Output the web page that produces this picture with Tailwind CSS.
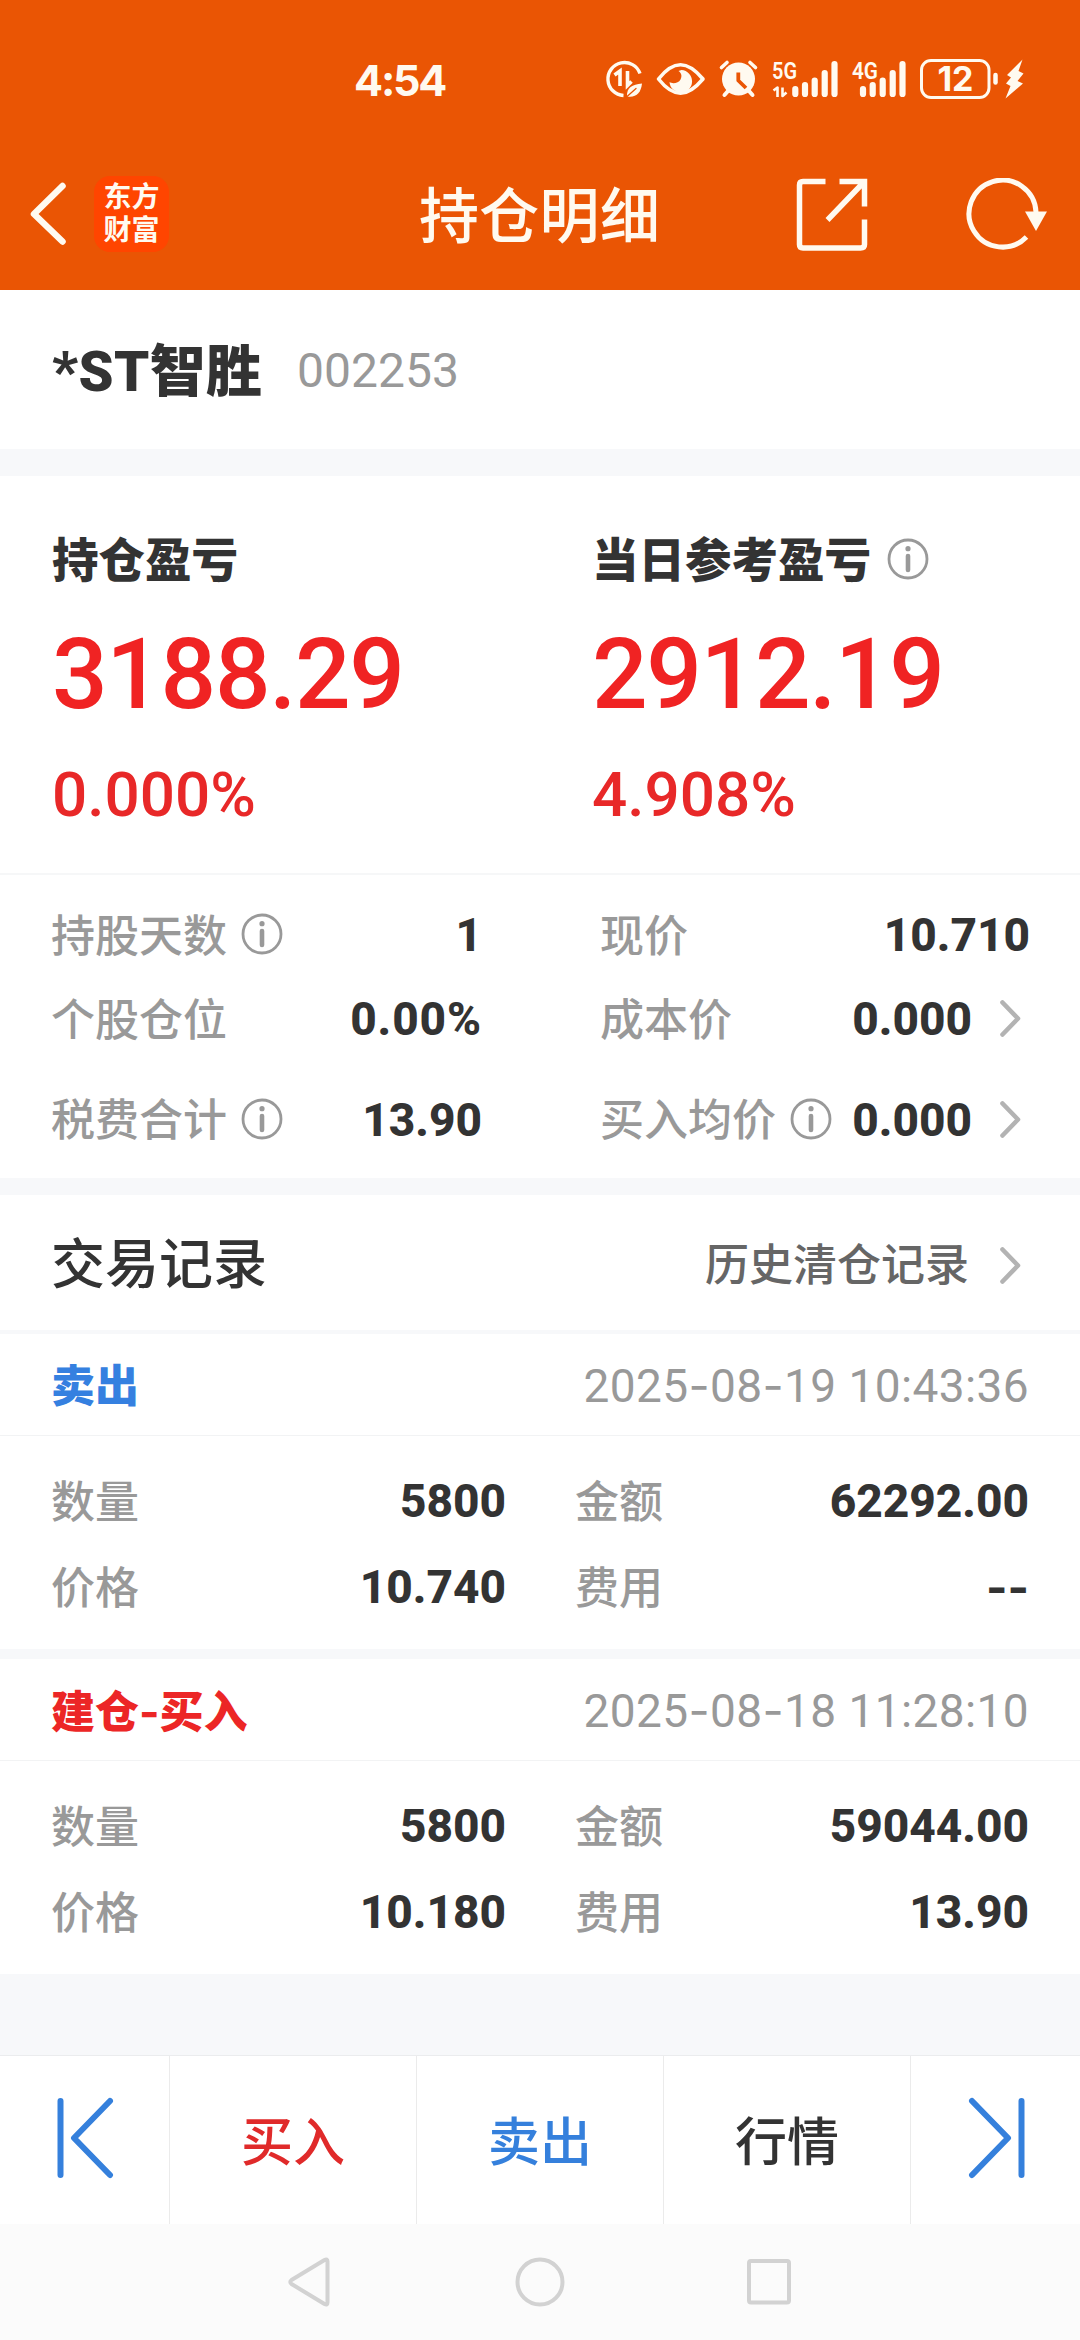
<!DOCTYPE html>
<html lang="zh-CN">
<head>
<meta charset="utf-8">
<title>持仓明细</title>
<script src="https://cdn.jsdelivr.net/npm/@tailwindcss/browser@4"></script>
</head>
<body class="w-[1080px] h-[2340px] overflow-hidden bg-[#f7f8fa] text-[#333333] leading-none whitespace-nowrap font-[Roboto,'Noto_Sans_CJK_SC',sans-serif]">
<svg class="hidden">
  <symbol id="info" viewBox="0 0 42 42"><circle cx="21" cy="21" r="19" fill="none" stroke="#999" stroke-width="2.8"/><circle cx="21" cy="10.7" r="2.6" fill="#999"/><path d="M21 18v14" stroke="#999" stroke-width="4.6" stroke-linecap="round"/></symbol>
  <symbol id="next" viewBox="0 0 21 37"><path d="M2.5 2.5 18 18.5 2.5 34.5" fill="none" stroke="#b3b3b3" stroke-width="4.6" stroke-linecap="round" stroke-linejoin="round"/></symbol>
</svg>
<div class="flex flex-col h-full">
  <header class="h-[290px] bg-[#ea5504] text-[#fffaf0] flex flex-col">
    <div class="h-[138px] pt-[40px] pl-[354px] flex">
      <div class="w-[226px] h-[80px] flex items-center text-[43px] font-bold font-[Inter] tracking-[-2.2px]">4:54</div>
      <svg class="w-[480px] h-[80px]" viewBox="0 0 480 80" fill="none" stroke="#fffaf0" stroke-linecap="round" stroke-linejoin="round">
        <!-- data saver -->
        <path d="M60 33.5A16.5 16.5 0 1 0 43.500 55.500" stroke-width="3.400" stroke-linecap="butt"/>
        <path d="M34.500 35 40 31v15M47.500 31v14.500l4-4" stroke-width="3.600" stroke-linecap="butt" stroke-linejoin="miter"/>
        <path d="M62 43.500C52 44.500 46.500 47.500 47 56.500 56 58 61 53 62 43.500Z" fill="#fffaf0" stroke="none"/>
        <path d="M46.500 57 56 48.500" stroke="#ea5504" stroke-width="1.300"/>
        <!-- eye -->
        <path d="M78.500 39C86 29.500 92.500 24.800 100.500 24.800S115 29.500 123 39C115 48.500 108.500 53.200 100.500 53.200S86 48.500 78.500 39Z" stroke-width="3.600"/>
        <path d="M101.500 30a11.300 11.300 0 1 1-12 12c2.500 2 9 1.500 11-2.500 1.800-3.500 1-6.500-2-8.500Z" fill="#fffaf0" stroke="none"/>
        <!-- alarm -->
        <circle cx="158.500" cy="39" r="16.500" fill="#fffaf0" stroke="none"/>
        <path d="M141.500 27.500 147 22.500M175.500 27.500 170 22.500" stroke-width="3.600"/><path d="M148 51 144.500 55M169 51 172.500 55" stroke-width="4"/>
        <path d="M158.300 32.500v8L166 48" stroke="#ea5504" stroke-width="3.800" stroke-linecap="butt"/>
        <!-- signals -->
        <g fill="#fffaf0" stroke="none" font-family="Roboto" font-weight="600" font-size="24">
          <text x="192" y="38.500" textLength="25" lengthAdjust="spacingAndGlyphs">5G</text>
          <text x="272" y="38.500" textLength="26" lengthAdjust="spacingAndGlyphs">4G</text>
        </g>
        <path d="M193.500 50.500 197.500 47.500v9.500M202.500 47.500v8.500l4-3.500" stroke-width="2.600" stroke-linecap="butt"/>
        <g stroke-width="6.200"><path d="M215.300 49v5M225 45v9M234.700 40.500v13.500M244.700 33v21M254.500 24v30"/><path d="M283 49v5M292.700 45v9M302.700 40.500v13.500M312.700 33v21M322.500 24v30"/></g>
        <!-- battery -->
        <rect x="341.500" y="20.500" width="67.500" height="37" rx="9.500" stroke-width="3"/>
        <path d="M415.500 35v7.500" stroke-width="4.500"/>
        <text x="375.500" y="51" text-anchor="middle" font-family="Inter" font-weight="700" font-size="34" fill="#fffaf0" stroke="none">12</text>
        <path d="M442.500 19.500 427 35l4 2.500-5 6 4.500 2.500-5 12.500L443 43.500 437.500 41 443.500 33.500 438.500 31Z" fill="#fffaf0" stroke="none"/>
      </svg>
    </div>
    <div class="h-[152px] pl-[30px] pr-[33px] flex items-center">
      <svg class="w-[37px] h-[64px]" viewBox="0 0 37 64" fill="none" stroke="#fffaf0" stroke-width="6.500" stroke-linecap="round" stroke-linejoin="round"><path d="M32.500 4 4 32 32.500 59.500"/></svg>
      <div class="ml-[27px] mr-[250px] w-[75px] h-[76px] rounded-[16px] bg-[#ff4500] text-[28px] font-bold leading-[33px] pt-[5px] text-center">东方<br>财富</div>
      <h1 class="w-[242px] text-[60px] font-medium tracking-[0.3px] pt-[8px]">持仓明细</h1>
      <svg class="ml-[135px] w-[73px] h-[73px]" viewBox="0 0 73 73" fill="none" stroke="#fffaf0" stroke-width="5.500"><path d="M29.500 3.500H7Q3.500 3.500 3.500 7V66.500Q3.500 70 7 70H64.500Q68.500 70 68.500 66.500V41.500M43.500 3.500H68.500V28.500M68 4 31.500 42"/></svg>
      <svg class="ml-auto w-[82px] h-[73px]" viewBox="0 0 82 73" fill="none" stroke="#fffaf0" stroke-width="5"><path d="M61.500 59A33.500 33.500 0 1 1 71 34"/><path d="M60 33.500H82L71 53Z" fill="#fffaf0" stroke="none"/></svg>
    </div>
  </header>

  <section class="h-[159px] bg-white pl-[52px] flex items-center">
    <h2 class="w-[245px] pt-[4px] text-[56px] font-black tracking-[0.400px]">*ST智胜</h2>
    <span class="text-[48px] text-[#999999] mt-[3px]">002253</span>
  </section>

  <section class="mt-[27px] h-[399px] border-b-2 border-[#f6f7f8] bg-white pl-[52px] pt-[52px] flex">
    <div class="w-[540px]">
      <div class="h-[62px] flex items-center text-[46.500px] font-black"><span class="pt-[4px]">持仓盈亏</span></div>
      <div class="h-[166px] pt-[3px] flex items-center text-[98px] font-medium text-[#f02323] tracking-[-1.400px]">3188.29</div>
      <div class="h-[74px] pt-[3px] flex items-center text-[62px] font-medium text-[#e82828]">0.000%</div>
    </div>
    <div>
      <div class="h-[62px] flex items-center text-[46.500px] font-black"><span class="pt-[4px]">当日参考盈亏</span><svg class="ml-[16px] w-[42px] h-[42px]"><use href="#info"/></svg></div>
      <div class="h-[166px] pt-[3px] flex items-center text-[98px] font-medium text-[#f02323] tracking-[-1.400px]">2912.19</div>
      <div class="h-[74px] pt-[3px] flex items-center text-[62px] font-medium text-[#e82828]">4.908%</div>
    </div>
  </section>

  <section class="h-[303px] bg-white pl-[51px] pr-[50px] pt-[18px] flex text-[44px] font-medium text-[#999999]">
    <div class="w-[431px]">
      <div class="h-[84px] flex items-center"><span class="pt-[3px]">持股天数</span><svg class="ml-[14px] mb-[2px] w-[42px] h-[42px]"><use href="#info"/></svg><b class="ml-auto text-[46px] text-[#333333] font-extrabold">1</b></div>
      <div class="h-[84px] flex items-center"><span class="pt-[3px]">个股仓位</span><b class="ml-auto text-[46px] text-[#333333] font-extrabold tracking-[0.900px]">0.00%</b></div>
      <div class="mt-[17px] h-[84px] flex items-center"><span class="pt-[2px]">税费合计</span><svg class="ml-[14px] mb-[2px] w-[42px] h-[42px]"><use href="#info"/></svg><b class="ml-auto text-[46px] text-[#333333] font-extrabold">13.90</b></div>
    </div>
    <div class="ml-[118px] w-[430px]">
      <div class="h-[84px] flex items-center"><span class="pt-[3px]">现价</span><b class="ml-auto text-[46px] text-[#333333] font-extrabold">10.710</b></div>
      <div class="h-[84px] flex items-center"><span class="pt-[3px]">成本价</span><b class="ml-auto text-[46px] text-[#333333] font-extrabold">0.000</b><svg class="ml-[28px] mr-[9px] mb-[2px] w-[21px] h-[37px]"><use href="#next"/></svg></div>
      <div class="mt-[17px] h-[84px] flex items-center"><span class="pt-[2px]">买入均价</span><svg class="ml-[14px] mb-[2px] w-[42px] h-[42px]"><use href="#info"/></svg><b class="ml-auto text-[46px] text-[#333333] font-extrabold">0.000</b><svg class="ml-[28px] mr-[9px] mb-[2px] w-[21px] h-[37px]"><use href="#next"/></svg></div>
    </div>
  </section>

  <section class="mt-[17px] h-[135px] bg-white pl-[51px] pr-[59px] pt-[5px] flex items-center">
    <h2 class="pt-[1px] text-[54px] font-medium">交易记录</h2>
    <span class="ml-auto pt-[2px] text-[44px] font-medium text-[#666666]">历史清仓记录</span>
    <svg class="ml-[31px] w-[21px] h-[37px]"><use href="#next"/></svg>
  </section>

  <section class="mt-[4px] h-[315px] bg-white text-[44px] font-medium text-[#999999]">
    <div class="h-[102px] border-b border-[#f2f3f4] pl-[51px] pr-[51px] flex items-center justify-between"><b class="pt-[5px] text-[#3580e0] font-black">卖出</b><span class="pt-[2px] font-normal text-[46px] tracking-[0.400px]">2025<span class="font-[Inter]">-</span>08<span class="font-[Inter]">-</span>19 10:43:36</span></div>
    <div class="pl-[51px] pr-[51px] pt-[22px] flex">
      <div class="w-[455px]">
        <div class="h-[86px] flex items-center justify-between"><span class="pt-[3px]">数量</span><b class="text-[46px] text-[#333333] font-extrabold">5800</b></div>
        <div class="h-[86px] flex items-center justify-between"><span class="pt-[3px]">价格</span><b class="text-[46px] text-[#333333] font-extrabold">10.740</b></div>
      </div>
      <div class="ml-[69px] w-[454px]">
        <div class="h-[86px] flex items-center justify-between"><span class="pt-[3px]">金额</span><b class="text-[46px] text-[#333333] font-extrabold">62292.00</b></div>
        <div class="h-[86px] flex items-center justify-between"><span class="pt-[3px]">费用</span><b class="text-[46px] text-[#333333] font-[Inter]">--</b></div>
      </div>
    </div>
  </section>

  <section class="mt-[10px] h-[315px] bg-white text-[44px] font-medium text-[#999999]">
    <div class="h-[102px] border-b border-[#f2f3f4] pl-[51px] pr-[51px] flex items-center justify-between"><b class="pt-[5px] text-[#ec2626] font-black">建仓<span class="font-[Inter] font-bold">-</span>买入</b><span class="pt-[2px] font-normal text-[46px] tracking-[0.400px]">2025<span class="font-[Inter]">-</span>08<span class="font-[Inter]">-</span>18 11:28:10</span></div>
    <div class="pl-[51px] pr-[51px] pt-[22px] flex">
      <div class="w-[455px]">
        <div class="h-[86px] flex items-center justify-between"><span class="pt-[3px]">数量</span><b class="text-[46px] text-[#333333] font-extrabold">5800</b></div>
        <div class="h-[86px] flex items-center justify-between"><span class="pt-[3px]">价格</span><b class="text-[46px] text-[#333333] font-extrabold">10.180</b></div>
      </div>
      <div class="ml-[69px] w-[454px]">
        <div class="h-[86px] flex items-center justify-between"><span class="pt-[3px]">金额</span><b class="text-[46px] text-[#333333] font-extrabold">59044.00</b></div>
        <div class="h-[86px] flex items-center justify-between"><span class="pt-[3px]">费用</span><b class="text-[46px] text-[#333333] font-extrabold">13.90</b></div>
      </div>
    </div>
  </section>

  <nav class="mt-auto h-[169px] bg-white border-t border-[#ebecee] flex text-[52px] font-medium">
    <div class="w-[170px] pl-[57px] border-r border-[#ebebeb] flex items-center pb-[5px]">
      <svg class="w-[57px] h-[82px]" viewBox="0 0 57 82" fill="none" stroke="#3580dc" stroke-width="6" stroke-linecap="round" stroke-linejoin="round"><path d="M3.500 4V78M53 4 17 41 53 78"/></svg>
    </div>
    <div class="w-[247px] pt-[8px] border-r border-[#ebebeb] flex items-center justify-center text-[#e02a2a]">买入</div>
    <div class="w-[247px] pt-[8px] border-r border-[#ebebeb] flex items-center justify-center text-[#3580dc]">卖出</div>
    <div class="w-[247px] pt-[8px] border-r border-[#ebebeb] flex items-center justify-center">行情</div>
    <div class="w-[169px] pl-[57px] flex items-center pb-[5px]">
      <svg class="w-[57px] h-[82px]" viewBox="0 0 57 82" fill="none" stroke="#3580dc" stroke-width="6" stroke-linecap="round" stroke-linejoin="round"><path d="M53.500 4V78M4 4 40 41 4 78"/></svg>
    </div>
  </nav>
  <div class="h-[116px] bg-[#fbfbfb] pl-[286px] flex items-center">
    <svg class="w-[508px] h-[52px]" viewBox="0 0 508 52" fill="none" stroke="#d2d2d2" stroke-width="4" stroke-linejoin="round"><path d="M41.500 5.500V46.500Q41.500 49.500 38.500 48L5.500 28Q3 26 5.500 24L38.500 4Q41.500 2.500 41.500 5.500Z"/><circle cx="254" cy="26" r="22.500"/><rect x="463" y="5" width="40" height="41.500" rx="2"/></svg>
  </div>
</div>
</body>
</html>
